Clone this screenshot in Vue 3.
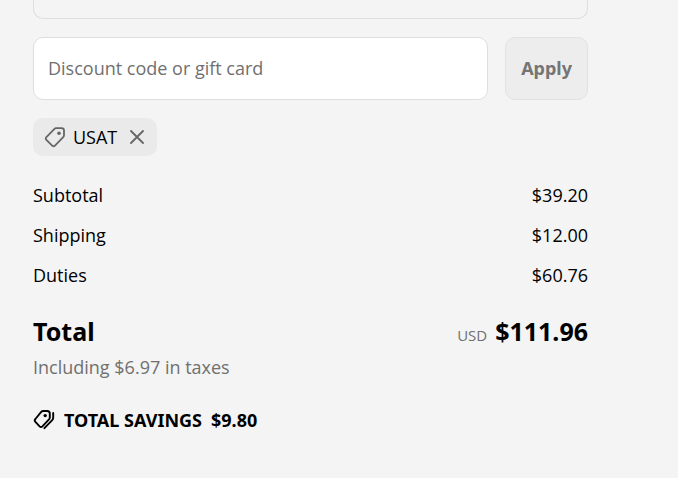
<script setup>
import { ref } from 'vue'

const code = ref('')
const discounts = ref(['USAT'])
const lines = [
  { label: 'Subtotal', amount: '$39.20' },
  { label: 'Shipping', amount: '$12.00' },
  { label: 'Duties', amount: '$60.76' },
]

function removeDiscount(name) {
  discounts.value = discounts.value.filter((d) => d !== name)
}
</script>

<template>
  <main class="summary">
    <div class="panel"></div>

    <form class="discount" @submit.prevent>
      <input v-model="code" class="field" type="text" placeholder="Discount code or gift card" aria-label="Discount code or gift card" />
      <button class="apply" type="submit" disabled>Apply</button>
    </form>

    <ul class="tags">
      <li v-for="name in discounts" :key="name" class="tag">
        <svg class="tag-icon" viewBox="0 0 22 22" aria-hidden="true">
          <path d="M12.2 2.2H17.6Q20 2.2 20 4.6V9.2Q20 10.3 19.2 11.1L11 19.6Q9.6 21 8.2 19.6L2.4 13.9Q1 12.5 2.4 11.1L10.2 3.2Q11.1 2.2 12.2 2.2Z" />
          <circle cx="15" cy="7.3" r="1.8" />
        </svg>
        <span>{{ name }}</span>
        <button class="remove" type="button" :aria-label="`Remove ${name}`" @click="removeDiscount(name)">
          <svg class="cross" viewBox="0 0 14 14" aria-hidden="true">
            <path d="M1 1L13 13M13 1L1 13" />
          </svg>
        </button>
      </li>
    </ul>

    <dl class="lines">
      <div v-for="line in lines" :key="line.label" class="line">
        <dt>{{ line.label }}</dt>
        <dd>{{ line.amount }}</dd>
      </div>
    </dl>

    <div class="total">
      <h2>Total</h2>
      <p class="price"><abbr>USD</abbr><strong>$111.96</strong></p>
    </div>
    <p class="taxes">Including $6.97 in taxes</p>

    <p class="savings">
      <svg class="savings-icon" viewBox="0 0 22 22" aria-hidden="true">
        <path d="M10.2 2H14.2Q16.8 2 16.8 4.6V8.4Q16.8 9.6 16 10.4L9.4 17.3Q8 18.7 6.6 17.3L2.4 12.8Q1.1 11.4 2.4 10L8.2 2.9Q9.1 2 10.2 2Z" />
        <path d="M20.2 4V8.4Q20.2 10.1 19 11.3L11.4 19.2" />
        <circle cx="12.2" cy="6.6" r="1.7" />
      </svg>
      <span>TOTAL SAVINGS</span>
      <span>$9.80</span>
    </p>
  </main>
</template>

<style>
body {
  background: #f4f4f4;
}
</style>

<style scoped>
.summary {
  box-sizing: border-box;
  padding: 0 90px 44px 33px;
  font-family: "Open Sans", "Noto Sans", sans-serif;
  font-size: 18px;
  line-height: 24px;
  color: #000;
}

p,
h2,
dl,
dd,
ul {
  margin: 0;
  padding: 0;
}

.panel {
  height: 18px;
  border: 1px solid #dedede;
  border-top: 0;
  border-radius: 0 0 10px 10px;
}

.discount {
  display: flex;
  gap: 17px;
  margin-top: 18px;
}

.field {
  box-sizing: border-box;
  flex: 1;
  min-width: 0;
  height: 63px;
  padding: 0 14px 2px;
  border: 1px solid #dedede;
  border-radius: 10px;
  background: #fff;
  font: inherit;
  color: #000;
}

.field::placeholder {
  color: #707070;
  opacity: 1;
}

.apply {
  padding: 0 15px 2px;
  border: 1px solid #e2e2e2;
  border-radius: 10px;
  background: #ededed;
  font: inherit;
  color: #757575;
}

.apply,
h2,
strong,
.savings {
  font-family: "Noto Sans", "Open Sans", sans-serif;
  font-weight: 700;
}

.tags {
  display: flex;
  margin-top: 18px;
  list-style: none;
}

.tag {
  display: flex;
  align-items: center;
  padding: 7px 13px 7px 11px;
  border-radius: 10px;
  background: #eaeaea;
}

.tag-icon {
  width: 22px;
  height: 22px;
  margin-right: 7px;
  fill: none;
  stroke: #666;
  stroke-width: 1.8;
}

.tag-icon circle {
  fill: #666;
  stroke: none;
}

.remove {
  display: flex;
  margin-left: 13px;
  padding: 0;
  border: 0;
  background: none;
}

.cross {
  width: 14px;
  height: 14px;
  fill: none;
  stroke: #666;
  stroke-width: 1.8;
  stroke-linecap: round;
}

.lines {
  display: grid;
  gap: 16px;
  margin-top: 27px;
}

.line,
.total {
  display: flex;
  justify-content: space-between;
}

.total {
  align-items: baseline;
  margin-top: 28px;
  line-height: 32px;
}

h2,
strong {
  font-size: 25px;
}

.price {
  display: flex;
  align-items: baseline;
  gap: 8px;
}

abbr {
  font-size: 15px;
  color: #707070;
}

.taxes {
  margin-top: 4px;
  color: #707070;
}

.savings {
  display: flex;
  align-items: center;
  gap: 9px;
  margin-top: 29px;
}

.savings-icon {
  width: 22px;
  height: 22px;
  fill: none;
  stroke: #000;
  stroke-width: 1.9;
  stroke-linecap: round;
}

.savings-icon circle {
  fill: #000;
  stroke: none;
}
</style>
